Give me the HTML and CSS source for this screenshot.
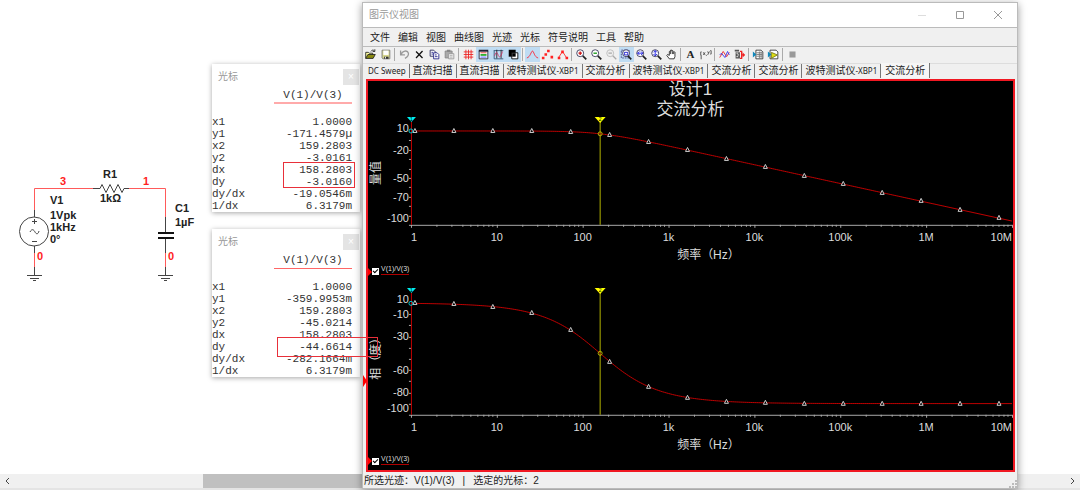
FILE: index.html
```html
<!doctype html>
<html lang="zh-CN">
<head>
	<meta charset="UTF-8">
	<title>图示仪视图</title>
	<link rel="stylesheet" href="styles.css">
</head>
<body>

	<main class="workspace">
		<!-- RC low-pass circuit -->
		<svg class="schematic" width="210" height="150" viewBox="0 150 210 150" role="img" aria-label="RC">
			<g class="wire">
				<path d="M34.500 210V188.500H94M129 188.500H165.500V218M34.500 252V268M165.500 252V268"/>
			</g>
			<g class="part">
				<path d="M34.500 210v7M34.500 246v7M34.500 267v8M165.500 217v16M165.500 239v14M165.500 267v8"/>
				<path d="M93 188.500h7l2-4 4 8 4-8 4 8 4-8 4 8 2-4h5"/>
				<circle cx="34" cy="231.500" r="14.500"/>
				<path d="M32 221.500h5M34.500 219v5M32 241.500h5M30 232c2-4 4-2 5 0s3 3 4-1"/>
				<path d="M27 275.500h15M30 278.500h9M33 280.500h3M158 275.500h15M161 278.500h9M164 280.500h3"/>
				<path class="plate" d="M158 233h16M158 238h16"/>
			</g>
			<g class="part-text">
				<text x="50" y="204">V1</text>
				<text x="50" y="219">1Vpk</text>
				<text x="50" y="231">1kHz</text>
				<text x="50" y="243">0°</text>
				<text x="103" y="178">R1</text>
				<text x="100" y="202">1kΩ</text>
				<text x="175" y="212">C1</text>
				<text x="175" y="226">1µF</text>
			</g>
			<g class="net-text">
				<text x="60" y="185">3</text>
				<text x="143" y="185">1</text>
				<text x="37" y="260">0</text>
				<text x="168" y="260">0</text>
			</g>
		</svg>

		<section class="cursor-panel cursor-mag">
			<header><h2>光标</h2><button type="button" aria-label="关闭">×</button></header>
			<table>
				<thead><tr><td></td><th scope="col"><span>V(1)/V(3)</span></th></tr></thead>
				<tbody>
					<tr><th scope="row">x1</th><td>1.0000</td></tr>
					<tr><th scope="row">y1</th><td>-171.4579µ</td></tr>
					<tr><th scope="row">x2</th><td>159.2803</td></tr>
					<tr><th scope="row">y2</th><td>-3.0161</td></tr>
					<tr><th scope="row">dx</th><td>158.2803</td></tr>
					<tr><th scope="row">dy</th><td>-3.0160</td></tr>
					<tr><th scope="row">dy/dx</th><td>-19.0546m</td></tr>
					<tr><th scope="row">1/dx</th><td>6.3179m</td></tr>
				</tbody>
			</table>
		</section>

		<section class="cursor-panel cursor-phase">
			<header><h2>光标</h2><button type="button" aria-label="关闭">×</button></header>
			<table>
				<thead><tr><td></td><th scope="col"><span>V(1)/V(3)</span></th></tr></thead>
				<tbody>
					<tr><th scope="row">x1</th><td>1.0000</td></tr>
					<tr><th scope="row">y1</th><td>-359.9953m</td></tr>
					<tr><th scope="row">x2</th><td>159.2803</td></tr>
					<tr><th scope="row">y2</th><td>-45.0214</td></tr>
					<tr><th scope="row">dx</th><td>158.2803</td></tr>
					<tr><th scope="row">dy</th><td>-44.6614</td></tr>
					<tr><th scope="row">dy/dx</th><td>-282.1664m</td></tr>
					<tr><th scope="row">1/dx</th><td>6.3179m</td></tr>
				</tbody>
			</table>
		</section>

		<section class="grapher">
			<header class="titlebar">
				<h1>图示仪视图</h1>
				<div class="window-buttons">
					<button type="button" class="minimize" aria-label="最小化"><svg width="10" height="10"><path d="M1 5.500h8"/></svg></button>
					<button type="button" aria-label="最大化"><svg width="10" height="10"><path d="M1.500 1.500h7v7h-7z"/></svg></button>
					<button type="button" aria-label="关闭"><svg width="10" height="10"><path d="M1 1l8 8M9 1l-8 8"/></svg></button>
				</div>
			</header>

			<nav class="menubar">
				<button type="button">文件</button>
				<button type="button">编辑</button>
				<button type="button">视图</button>
				<button type="button">曲线图</button>
				<button type="button">光迹</button>
				<button type="button">光标</button>
				<button type="button">符号说明</button>
				<button type="button">工具</button>
				<button type="button">帮助</button>
			</nav>

			<div class="toolbar" role="toolbar">
				<button type="button" aria-label="打开"><svg viewBox="0 0 15 15"><path d="M2 12V5h3l1 1h4v2" fill="#ffffa0" stroke="#222"/><path d="M2 12l2.500-4.500H13L10.500 12z" fill="#8a8a10" stroke="#222"/><path d="M8 4c1-2 3-2 4-.5M12.500 1.500v2.500H10" fill="none" stroke="#222"/></svg></button>
				<button type="button" aria-label="保存"><svg viewBox="0 0 15 15"><path d="M3.500 2.500h9v10h-8l-1-1z" fill="#d6d68c" stroke="#777"/><path d="M5 3h6v5H5z" fill="#fff"/><path d="M6 10h5v2.500H6z" fill="#333"/><path d="M7 10h1v2H7z" fill="#fff"/></svg></button>
				<span class="sep"></span>
				<button type="button" aria-label="撤销" disabled><svg viewBox="0 0 15 15"><path d="M3 3v5h5M3.500 7.500C5 3 11 2 12 6c.5 3-2 5-4 6" fill="none" stroke="#999" stroke-width="1.500"/></svg></button>
				<button type="button" aria-label="剪切"><svg viewBox="0 0 15 15"><path d="M3.500 4l7.500 7.500M11 3.500L3.500 11.500" stroke="#111" stroke-width="1.500"/></svg></button>
				<button type="button" aria-label="复制"><svg viewBox="0 0 15 15"><path d="M2.500 2.500h4l2 2v5h-6z" fill="#fff" stroke="#225"/><path d="M6.500 5.500h4l2 2v5h-6z" fill="#fff" stroke="#228"/><path d="M4 5h2M4 7h2M8 8h2M8 10h3" stroke="#228"/></svg></button>
				<button type="button" aria-label="粘贴" disabled><svg viewBox="0 0 15 15"><path d="M2.500 3.500h8v8h-8z" fill="#aaa" stroke="#888"/><path d="M4.500 2h4v2.500h-4z" fill="#888"/><path d="M6.500 6.500h6v6h-6z" fill="#eee" stroke="#999"/><path d="M8 8.500h3M8 10.500h3" stroke="#aaa"/></svg></button>
				<span class="sep"></span>
				<button type="button" aria-label="网格"><svg viewBox="0 0 15 15"><path d="M4.500 2v11M7.500 2v11M10.500 2v11M2 4.500h11M2 7.500h11M2 10.500h11" stroke="#e22"/></svg></button>
				<button type="button" class="on" aria-label="图例"><svg viewBox="0 0 15 15"><path d="M2.500 3.500h10v9h-10z" fill="#fff" stroke="#223"/><path d="M2 3h11" stroke="#223" stroke-width="2"/><path d="M4 5.500h7" stroke="#d33"/><path d="M4 8h7" stroke="#2a2" stroke-width="2"/><path d="M4 10.500h7" stroke="#44f"/></svg></button>
				<button type="button" class="on" aria-label="显示光标"><svg viewBox="0 0 15 15"><path d="M2.500 3v9.500H13M2 3h11" fill="none" stroke="#357"/><path d="M5.500 2v10M10.500 2v10" stroke="#222"/><path d="M3 9c2-6 3-4 4-1s3 4 5-4" fill="none" stroke="#c36"/></svg></button>
				<button type="button" class="on" aria-label="黑白色"><svg viewBox="0 0 15 15"><path d="M2 2h8v8H2z" fill="#000"/><path d="M5.500 5.500h7v7h-7z" fill="#fff" stroke="#000"/><path d="M6 6h4v4H6z" fill="#000"/></svg></button>
				<span class="sep"></span>
				<button type="button" class="on" aria-label="仅显示线"><svg viewBox="0 0 15 15"><path d="M1 11.500c4-1 5-8 6.500-8s2 7 6.500 8" fill="none" stroke="#f23"/></svg></button>
				<button type="button" aria-label="仅显示符号"><svg viewBox="0 0 15 15"><path d="M1 10h3v3H1zM4 6h3v3H4zM7 2h3v3H7zM11 9h3v3h-3z" fill="#f22"/></svg></button>
				<button type="button" aria-label="线和符号"><svg viewBox="0 0 15 15"><path d="M3 11l4.500-7L12 11" fill="none" stroke="#f22"/><path d="M2 10h3v3H2zM6 3h3v3H6zM11 10h3v3h-3z" fill="#f22"/></svg></button>
				<span class="sep"></span>
				<button type="button" aria-label="放大"><svg viewBox="0 0 15 15"><circle cx="6" cy="6" r="4" class="lens"/><path d="M9 9l4 4" class="grip"/><path d="M4 6h4M6 4v4" stroke="#c11" stroke-width="1.500"/></svg></button>
				<button type="button" aria-label="缩小"><svg viewBox="0 0 15 15"><circle cx="6" cy="6" r="4" class="lens"/><path d="M9 9l4 4" class="grip"/><path d="M4 6h4" stroke="#191" stroke-width="1.500"/></svg></button>
				<button type="button" aria-label="恢复缩放" disabled><svg viewBox="0 0 15 15"><circle cx="6" cy="6" r="4" fill="#eee" stroke="#bbb"/><path d="M9 9l4 4M4 6h4" stroke="#aaa" stroke-width="1.500"/></svg></button>
				<button type="button" class="on" aria-label="缩放区域"><svg viewBox="0 0 15 15"><path d="M1.500 2.500h9v9h-9z" fill="none" stroke="#448" stroke-dasharray="2 1"/><circle cx="7" cy="6" r="4" class="lens"/><path d="M9 9l4 4" class="grip"/><path d="M5 5h4v3H5z" fill="none" stroke="#11c"/></svg></button>
				<button type="button" aria-label="水平缩放"><svg viewBox="0 0 15 15"><circle cx="6" cy="6" r="4" class="lens"/><path d="M9 9l4 4" class="grip"/><path d="M3 6h6M5 4L3 6l2 2M7 4l2 2-2 2" fill="none" stroke="#11d"/></svg></button>
				<button type="button" aria-label="垂直缩放"><svg viewBox="0 0 15 15"><circle cx="6" cy="6" r="4" class="lens"/><path d="M9 9l4 4" class="grip"/><path d="M6 3v6M4 5l2-2 2 2M4 7l2 2 2-2" fill="none" stroke="#11d"/></svg></button>
				<button type="button" aria-label="平移"><svg viewBox="0 0 15 15"><path d="M5 12.500L2 8.500l1-1 2 1V4l1-.5.5.5V2.500h1.500V4l1-1 1 1v1l1-.5.5.5v5l-1 2.500z" fill="#fff" stroke="#222"/><path d="M6.500 4v3M8.500 4v3M10 5v2" stroke="#222"/></svg></button>
				<span class="sep"></span>
				<button type="button" class="text-tool" aria-label="添加文本">A</button>
				<button type="button" aria-label="数据标签"><svg viewBox="0 0 15 15"><path d="M2.500 13V9M3 4.500H2v4h1M5 5l2 3M7 5L5 8M8.500 8v1M10 4l1 2 1-2M11 6l-1 2M13 3h1v4h-1" fill="none" stroke="#444"/></svg></button>
				<span class="sep"></span>
				<button type="button" aria-label="叠加光迹"><svg viewBox="0 0 15 15"><path d="M2 11L6 4l4 6 3-5" fill="none" stroke="#e22"/><path d="M2 8l2-2 4 5 3-7 2 4" fill="none" stroke="#33e"/></svg></button>
				<button type="button" aria-label="导出数据"><svg viewBox="0 0 15 15"><path d="M2 2h5v2H2zM3 5h5v7H3z" fill="#555"/><path d="M4 6h2M5 8h2M4 10h2" stroke="#fff"/><path d="M8 4h2v8H8M10 8h3" fill="none" stroke="#e22" stroke-width="1.500"/><path d="M11 5l3 3-3 3z" fill="#e22"/></svg></button>
				<span class="sep"></span>
				<button type="button" aria-label="导出到Excel"><svg viewBox="0 0 15 15"><path d="M4.500 2.500h6l2 2v8h-8z" fill="#fff" stroke="#333"/><path d="M5 5.500h7M5 7.500h7M5 9.500h7M8.500 4v8M10.500 4v8" stroke="#777"/><path d="M1 4l4 3.500L1 11z" fill="#18b"/></svg></button>
				<button type="button" aria-label="保存到测量文件"><svg viewBox="0 0 15 15"><path d="M3.500 2.500h7l2 2v8h-9z" fill="#fff" stroke="#333"/><path d="M5 5l7 3-7 4z" fill="#dd1" stroke="#772"/><path d="M1 4l4 3.500L1 11z" fill="#18b"/></svg></button>
				<span class="sep"></span>
				<button type="button" aria-label="停止" disabled><svg viewBox="0 0 15 15"><path d="M4 4h7v7H4z" fill="#999"/></svg></button>
			</div>

			<div class="tabs" role="tablist">
				<button type="button" role="tab"><small>DC Sweep</small></button>
				<button type="button" role="tab">直流扫描</button>
				<button type="button" role="tab">直流扫描</button>
				<button type="button" role="tab">波特测试仪<small>-XBP1</small></button>
				<button type="button" role="tab">交流分析</button>
				<button type="button" role="tab">波特测试仪<small>-XBP1</small></button>
				<button type="button" role="tab">交流分析</button>
				<button type="button" role="tab">交流分析</button>
				<button type="button" role="tab">波特测试仪<small>-XBP1</small></button>
				<button type="button" role="tab" aria-selected="true" class="active">交流分析</button>
			</div>

			<div class="plots">
				<div class="plot-title">
					<h2>设计1</h2>
					<h3>交流分析</h3>
				</div>
				<svg class="chart" id="magnitude" viewBox="0 0 646 144" role="img" aria-label="量值"></svg>
				<div class="legend">
					<input type="checkbox" id="showMag" checked>
					<label for="showMag">V(1)/V(3)</label>
				</div>
				<svg class="chart" id="phase" viewBox="0 0 646 176" role="img" aria-label="相（度）"></svg>
				<div class="legend">
					<input type="checkbox" id="showPhase" checked>
					<label for="showPhase">V(1)/V(3)</label>
				</div>
			</div>

			<footer class="statusbar">
				<span>所选光迹：V(1)/V(3)</span>
				<span>|</span>
				<span>选定的光标：2</span>
				<svg class="resize" width="8" height="8"><path d="M6 0h2v2H6zM3 3h2v2H3zM6 3h2v2H6zM0 6h2v2H0zM3 6h2v2H3zM6 6h2v2H6z"/></svg>
			</footer>
			<span class="active-mark"></span>
		</section>

		<div class="callout callout-mag"></div>
		<div class="callout callout-phase"></div>
	</main>

	<div class="scrollbar">
		<button type="button" aria-label="向左滚动"><svg width="6" height="8"><path d="M5 1L2 4l3 3"/></svg></button>
		<div class="track"><div class="thumb"></div></div>
		<button type="button" aria-label="向右滚动"><svg width="6" height="8"><path d="M1 1l3 3-3 3"/></svg></button>
	</div>

	<script src="charts.js"></script>
</body>
</html>
```
FILE: styles.css
```css
* {
	box-sizing: border-box;
}
html, body {
	height: 100%;
	margin: 0;
}
body {
	display: flex;
	flex-direction: column;
	overflow: hidden;
	background: #fff;
	color: #222;
	font: 10px/14px "Liberation Sans", "Noto Sans CJK SC", sans-serif;
}
h1, h2, h3 {
	margin: 0;
	font-size: 10px;
	font-weight: normal;
}
button {
	margin: 0;
	padding: 0;
	border: 0;
	background: none;
	color: inherit;
	font: inherit;
}
.workspace {
	flex: 1;
}

/* circuit */
.schematic {
	position: absolute;
	left: 0;
	top: 150px;
	fill: none;
}
.wire {
	stroke: #ff5a5a;
}
.part {
	stroke: #444;
}
.plate {
	stroke: #111;
	stroke-width: 2;
}
.part-text, .net-text {
	fill: #222;
	font-size: 11px;
	font-weight: bold;
}
.net-text {
	fill: #f22;
}

/* cursor read-outs */
.cursor-panel {
	position: absolute;
	left: 212px;
	width: 148px;
	background: #fff;
	box-shadow: 0 1px 5px rgba(0, 0, 0, .35);
}
.cursor-mag {
	top: 64px;
}
.cursor-phase {
	top: 229px;
}
.cursor-panel header {
	display: flex;
	justify-content: space-between;
	align-items: center;
	height: 24px;
	padding: 2px 1px 0 6px;
	color: #999;
}
.cursor-panel header button {
	width: 16px;
	height: 16px;
	background: #e4e4e4;
	color: #fff;
	line-height: 16px;
}
.cursor-panel table {
	width: 100%;
	border-collapse: collapse;
	color: #333;
	font: 11px/12px "Liberation Mono", monospace;
}
.cursor-panel th, .cursor-panel td {
	padding: 0;
	font-weight: normal;
	text-align: left;
}
.cursor-panel td {
	padding-right: 8px;
	text-align: right;
}
.cursor-panel thead th {
	padding: 0 8px 12px 0;
}
.cursor-panel thead span {
	display: block;
	width: 78px;
	margin-left: auto;
	border-bottom: 1px solid #f66;
	line-height: 15px;
	text-align: center;
}
.cursor-mag thead span {
	border-bottom: 2px solid #faa;
	line-height: 14px;
}

/* grapher window */
.grapher {
	position: absolute;
	left: 362px;
	right: 62px;
	top: 2px;
	display: flex;
	flex-direction: column;
	border: 1px solid #bbb;
	background: #f0f0f0;
	box-shadow: 0 2px 8px rgba(0, 0, 0, .4);
}
.titlebar {
	display: flex;
	align-items: center;
	justify-content: space-between;
	height: 25px;
	padding: 0 14px 0 6px;
	border-bottom: 1px solid #bbb;
	background: #fff;
	color: #999;
}
.window-buttons {
	display: flex;
	gap: 28px;
}
.window-buttons button {
	display: flex;
}
.window-buttons svg {
	fill: none;
	stroke: #999;
}
.window-buttons .minimize svg {
	stroke: #ddd;
}
.menubar {
	display: flex;
	gap: 8px;
	height: 19px;
	padding: 0 7px;
	border-bottom: 1px solid #bbb;
	line-height: 20px;
}
.toolbar {
	display: flex;
	align-items: center;
	height: 15px;
	margin-bottom: 1px;
}
.toolbar button {
	width: 15px;
	height: 15px;
}
.toolbar button.on {
	background: #bfdcf3;
}
.toolbar svg {
	display: block;
	width: 13px;
	height: 13px;
	margin: 1px;
}
.lens {
	fill: #fff;
	stroke: #335;
}
.grip {
	stroke: #222;
	stroke-width: 2;
}
.toolbar .text-tool {
	font: bold 11px/15px "Liberation Serif", serif;
}
.sep {
	width: 1px;
	height: 13px;
	margin: 0 2px 0 1px;
	background: #aaa;
}
.tabs {
	display: flex;
	align-items: flex-end;
	height: 15px;
	padding-left: 2px;
	border-top: 1px solid #ddd;
}
.tabs button {
	height: 14px;
	padding: 0 3px;
	border-right: 1px solid #777;
	line-height: 14px;
}
.tabs small {
	font: 8px "Noto Sans", sans-serif;
}
.tabs .active {
	height: 15px;
	padding: 0 4px;
	background: #f6f6f6;
	line-height: 12px;
}

/* plots */
.plots {
	margin: 1px 2px 2px 3px;
	border: 2px solid #f01822;
	background: #000;
	color: #ddd;
}
.plot-title {
	display: flex;
	flex-direction: column;
	gap: 2px;
	text-align: center;
}
.plot-title h2, .plot-title h3 {
	font-size: 17px;
	line-height: 18px;
}
.chart {
	display: block;
	width: 100%;
	overflow: visible;
	fill: none;
}
.chart text {
	fill: #ddd;
	font-size: 11px;
}
.chart .axis-title {
	font-size: 12px;
}
.axis {
	stroke: #aaa;
}
.y-axis, .trace {
	stroke: #c00000;
}
.marker {
	fill: #000;
	stroke: #ccc;
}
.cursor-1 {
	stroke: #00c8d0;
}
.cursor-2 {
	stroke: #b4b400;
}
.flag-1 {
	fill: #0ee;
}
.flag-2 {
	fill: #ff0;
}
.chart .flag-text {
	fill: #000;
	font-size: 5px;
}
.legend {
	display: flex;
	align-items: center;
	height: 14px;
}
.legend::before {
	content: "";
	flex: none;
	width: 0;
	height: 0;
	margin-top: 4px;
	border-top: 4px solid transparent;
	border-bottom: 4px solid transparent;
	border-left: 4px solid #f00;
}
.legend input {
	appearance: none;
	width: 7px;
	height: 7px;
	margin: 4px 2px 0 0;
	background: #fff;
}
.legend input:checked::after {
	content: "";
	display: block;
	width: 2px;
	height: 4px;
	margin: 0 2px;
	border: solid #000;
	border-width: 0 1px 1px 0;
	transform: rotate(45deg);
}
.legend label {
	border-bottom: 1px solid #b00000;
	font-size: 7px;
	line-height: 10px;
}
.plots .legend:last-child {
	height: 18px;
	padding-bottom: 4px;
}
.statusbar {
	display: flex;
	gap: 8px;
	height: 14px;
	padding-left: 1px;
	line-height: 14px;
}
.resize {
	align-self: flex-end;
	margin-left: auto;
	fill: #bbb;
}
.active-mark {
	position: absolute;
	left: 0;
	top: 372px;
	border-top: 6px solid transparent;
	border-bottom: 6px solid transparent;
	border-left: 4px solid #f00;
}

/* highlighted results */
.callout {
	position: absolute;
	border: 1px solid #e8303a;
}
.callout-mag {
	left: 283px;
	top: 162px;
	width: 72px;
	height: 26px;
}
.callout-phase {
	left: 277px;
	top: 337px;
	width: 101px;
	height: 20px;
}

.scrollbar {
	display: flex;
	height: 16px;
	border-bottom: 2px solid #e4e4e4;
	background: #f0f0f0;
}
.scrollbar button {
	display: grid;
	place-items: center;
	width: 14px;
}
.scrollbar svg {
	fill: none;
	stroke: #444;
}
.track {
	display: grid;
	flex: 1;
	grid-template-columns: 18fr 72fr 10fr;
}
.thumb {
	grid-column: 2;
	background: #c0c0c0;
}
```
FILE: charts.js
```js
const SVG = "http://www.w3.org/2000/svg";
const X0 = 43;          // 1 Hz
const DECADE = 86;
const DECADES = 7;
const FC = 159.155;     // corner frequency of 1k / 1u

function add(svg, tag, attrs, text){
	let el = document.createElementNS(SVG, tag);
	for(let name in attrs){
		el.setAttribute(name, attrs[name]);
	}
	if(text !== undefined){
		el.textContent = text;
	}
	svg.appendChild(el);
	return el;
}

function xOf(freq){
	return X0 + Math.log10(freq) * DECADE;
}

function drawChart(id, opt){
	let svg = document.getElementById(id);
	let right = X0 + DECADE * DECADES;
	let bottom = opt.bottom;
	let yOf = freq => opt.zero - opt.value(freq) * opt.scale;

	// axes and their ticks
	let ticks = "M" + (X0 - 2) + " " + (bottom + .5) + "H" + right;
	for(let d = 0; d <= DECADES; d++){
		ticks += "M" + (X0 + d * DECADE + .5) + " " + bottom + "v3";
		for(let n = 2; n < 10 && d < DECADES; n++){
			ticks += "M" + Math.round(xOf(n * 10 ** d)) + " " + bottom + "v2";
		}
	}
	for(let v = -10; v >= -90; v -= 10){
		ticks += "M" + (X0 - 2) + " " + (Math.round(opt.zero - v * opt.scale) + .5) + "h2";
	}
	add(svg, "path", {class: "axis", d: ticks});
	add(svg, "path", {class: "y-axis", d: "M" + (X0 + .5) + " " + (opt.flag + 5) + "V" + bottom});

	for(let v of opt.labels){
		let y = opt.zero - v * opt.scale + 4;
		if(v == 10) y = opt.zero + 1 - opt.topShift;
		if(v == -100) y = bottom - 3;
		add(svg, "text", {x: X0 - 2, y: y, "text-anchor": "end"}, v);
	}
	let names = ["1", "10", "100", "1k", "10k", "100k", "1M", "10M"];
	names.forEach((name, i) => {
		let last = i == DECADES;
		let x = last ? right : X0 + i * DECADE + (i == 0 ? 3 : 0);
		add(svg, "text", {x: x, y: bottom + 16, "text-anchor": last ? "end" : "middle"}, name);
	});
	add(svg, "text", {class: "axis-title", x: 341, y: bottom + 34, "text-anchor": "middle"}, "频率（Hz）");
	add(svg, "text", {class: "axis-title", "text-anchor": "middle", transform: "translate(12 " + opt.titleY + ") rotate(-90)"}, opt.title);

	// cursors
	let x2 = Math.round(xOf(159.28)) + .5;
	add(svg, "path", {class: "cursor-2", d: "M" + x2 + " " + opt.flag + "V" + bottom});
	add(svg, "path", {class: "flag-1", d: "M" + (X0 - 4) + " " + opt.flag + "h9l-4.500 5z"});
	add(svg, "path", {class: "flag-2", d: "M" + (x2 - 5.5) + " " + opt.flag + "h11l-5.500 6z"});
	add(svg, "text", {class: "flag-text", x: X0 + .5, y: opt.flag + 4, "text-anchor": "middle"}, "1");
	add(svg, "text", {class: "flag-text", x: x2, y: opt.flag + 4, "text-anchor": "middle"}, "2");

	// trace
	let line = "";
	for(let x = X0; x <= right; x += 2){
		let freq = 10 ** ((x - X0) / DECADE);
		line += (line ? "L" : "M") + x + " " + yOf(freq).toFixed(2);
	}
	add(svg, "path", {class: "trace", d: line});
	for(let i = 0; i < 16; i++){
		let x = X0 + 4 + i * 39;
		let y = Math.round(yOf(10 ** ((x - X0) / DECADE)));
		add(svg, "path", {class: "marker", d: "M" + (x - 2) + " " + (y + 1.5) + "l2-4 2 4z"});
	}
	add(svg, "circle", {class: "cursor-1", cx: X0, cy: yOf(1), r: 2});
	add(svg, "circle", {class: "cursor-2", cx: x2, cy: yOf(159.28), r: 2});
}

drawChart("magnitude", {
	value: f => -10 * Math.log10(1 + (f / FC) ** 2),
	zero: 12, scale: .94, bottom: 106, flag: -2, topShift: 0,
	labels: [10, -20, -50, -70, -100],
	title: "量值", titleY: 54
});
drawChart("phase", {
	value: f => -Math.atan(f / FC) * 180 / Math.PI,
	zero: 26, scale: 1.12, bottom: 138, flag: 11, topShift: 1,
	labels: [10, -10, -30, -60, -80, -100],
	title: "相（度）", titleY: 79
});
```
